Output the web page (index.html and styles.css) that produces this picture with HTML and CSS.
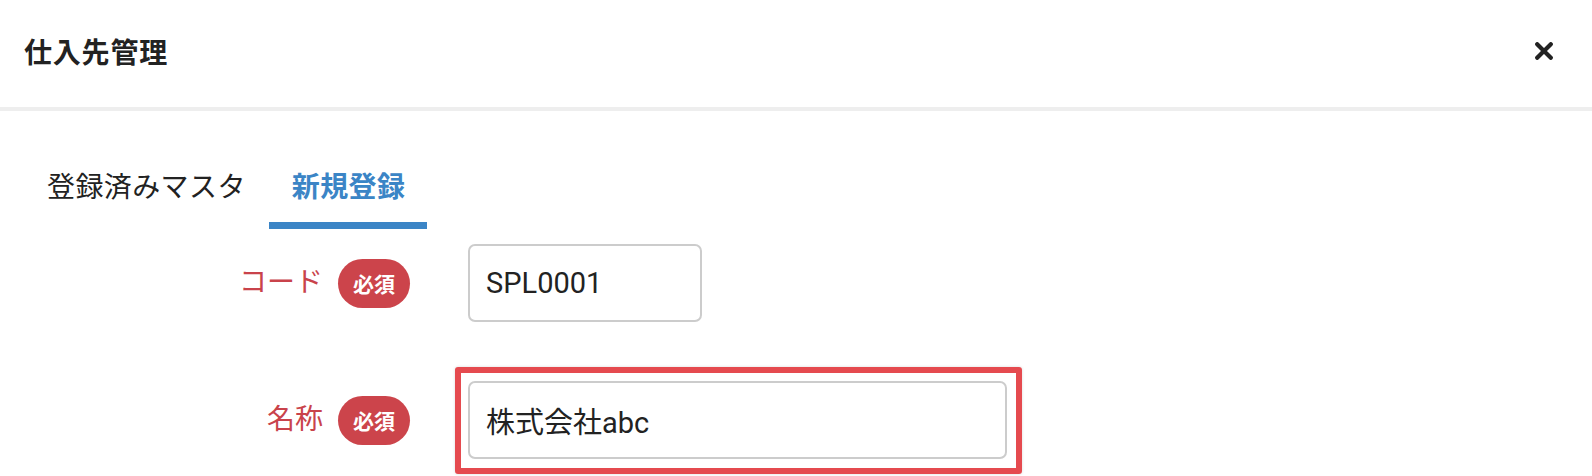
FILE: index.html
```html
<!doctype html>
<html>
<head>
<meta charset="utf-8" />
<title>仕入先管理</title>
<link rel="stylesheet" href="styles.css">
</head>
<body>
	<div class="modal">
		<header class="modal-head">
			<h1 class="modal-title">仕入先管理</h1>
			<a class="close" href="javascript:;">
				<svg width="18" height="18" viewBox="0 0 18 18"><path d="M2.2 2.2L15.8 15.8M15.8 2.2L2.2 15.8" stroke="#222" stroke-width="4.2" stroke-linecap="round" fill="none"/></svg>
			</a>
		</header>
		<nav class="tabs">
			<a class="tab" href="javascript:;">登録済みマスタ</a>
			<a class="tab active" href="javascript:;">新規登録</a>
		</nav>
		<div class="form">
			<div class="row">
				<div class="row-head">
					<span class="label">コード</span>
					<span class="badge">必須</span>
				</div>
				<input class="field short" type="text" value="SPL0001" />
			</div>
			<div class="row">
				<div class="row-head">
					<span class="label">名称</span>
					<span class="badge">必須</span>
				</div>
				<span class="mark">
					<input class="field long" type="text" value="株式会社abc" />
				</span>
			</div>
		</div>
	</div>
</body>
</html>
```

FILE: styles.css
```css
	*{box-sizing: border-box;}
	body{margin:0; background:#fff; font-family: Roboto, "Noto Sans CJK JP", sans-serif; color:#222; overflow:hidden;}
	.modal{width:1592px; height:476px;}
	.modal-head{height:111px; padding:0 39px 6px 24px; border-bottom:4px solid #eee; display:flex; justify-content:space-between; align-items:center;}
	.modal-title{margin:0; font-size:28px; font-weight:700; line-height:40px; letter-spacing:0.8px; font-family:"Noto Sans CJK JP", sans-serif; color:#222;}
	.close{display:block; width:18px; height:18px;}
	.close svg{display:block;}
	.tabs{display:flex; gap:1px; padding-left:24px; margin-top:54px;}
	.tab{display:block; padding:0 22px 17px 23px; line-height:40px; font-size:28px; letter-spacing:0.4px; font-family:"Noto Sans CJK JP", sans-serif; color:#222; text-decoration:none; border-bottom:7px solid transparent;}
	.tab.active{color:#3b85c6; font-weight:700; border-bottom-color:#3b85c6;}
	.form{padding-left:24px; margin-top:15px; display:flex; flex-direction:column; gap:59px;}
	.row{display:flex; align-items:center; height:78px;}
	.row-head{width:386px; display:flex; justify-content:flex-end; align-items:center; gap:15px;}
	.label{font-size:28px; line-height:40px; padding-bottom:6px; font-family:"Noto Sans CJK JP", sans-serif; color:#c9434b;}
	.badge{width:72px; height:49px; border-radius:25px; background:#cc444b; color:#fff; font-size:21px; font-weight:700; font-family:"Noto Sans CJK JP", sans-serif; display:flex; align-items:center; justify-content:center;}
	.field{height:78px; margin-left:58px; border:2px solid #ccc; border-radius:7px; padding:0 16px; font-size:29px; font-family:Roboto, "Noto Sans CJK JP", sans-serif; color:#222; background:#fff; outline:none;}
	.short{width:234px;}
	.mark{position:relative; margin-left:58px; display:block;}
	.mark .field{margin-left:0; width:539px; display:block;}
	.mark:after{content:""; position:absolute; left:-13px; top:-14px; right:-15px; bottom:-15px; border:6px solid #e54a4f; border-radius:3px; box-shadow:0 0 3px rgba(0,0,0,.15);}
```
